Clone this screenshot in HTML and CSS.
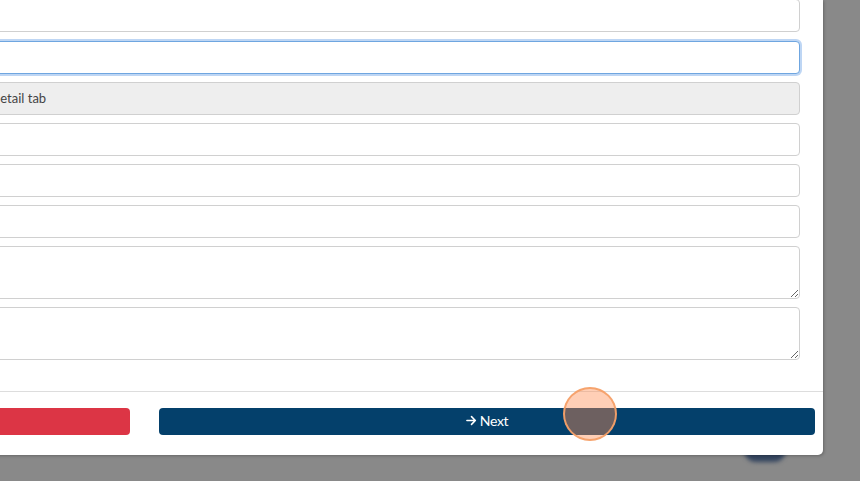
FILE: index.html
```html
<!DOCTYPE html>
<html lang="en">
<head>
<meta charset="utf-8">
<title>Modal form</title>
<link rel="stylesheet" href="styles.css">
</head>
<body>
<div class="page-behind">
  <div class="float-btn"></div>
</div>
<div class="overlay">
  <div class="modal">
    <div class="modal-body">
      <input class="field first" type="text">
      <input class="field focused" type="text">
      <input class="field readonly" type="text" value="detail tab" readonly>
      <input class="field" type="text">
      <input class="field" type="text">
      <input class="field" type="text">
      <textarea class="area"></textarea>
      <textarea class="area"></textarea>
    </div>
    <div class="modal-footer">
      <button class="btn btn-danger" type="button"></button>
      <button class="btn btn-primary" type="button"><svg class="arrow" viewBox="0 0 12 12" width="11" height="11" aria-hidden="true"><path d="M1 6h9.2M6 1.8L10.2 6 6 10.2" fill="none" stroke="#fff" stroke-width="1.7" stroke-linecap="round" stroke-linejoin="round"/></svg><span>Next</span></button>
    </div>
  </div>
</div>
<div class="click-marker"></div>
</body>
</html>
```
FILE: styles.css
```css
* { box-sizing: border-box; }
html, body {
  margin: 0;
  width: 860px;
  height: 481px;
  overflow: hidden;
  background: #898989;
  font-family: Lato, "Open Sans", sans-serif;
}
.page-behind {
  position: absolute;
  inset: 0;
}
.float-btn {
  position: absolute;
  left: 744px;
  top: 438px;
  width: 42px;
  height: 24px;
  border-radius: 12px;
  background: #34455f;
  filter: blur(2px);
}
.overlay {
  position: relative;
  width: 860px;
  height: 481px;
}
.modal {
  width: 867px;
  margin-left: -44px;
  background: #fff;
  border-radius: 0 0 5px 0;
  box-shadow: 1px 1px 3px rgba(0, 0, 0, 0.25);
  display: flex;
  flex-direction: column;
}
.modal-body {
  padding: 0 23px 31px 24px;
  display: flex;
  flex-direction: column;
  gap: 8px;
}
.field, .area {
  display: block;
  width: 100%;
  height: 33px;
  border: 1px solid #d0d0d0;
  border-radius: 4px;
  padding: 0 12px 1px 12px;
  font-family: Lato, "Open Sans", sans-serif;
  font-size: 13px;
  color: #495057;
  background: #fff;
  outline: none;
}
.field.first {
  margin-top: -1px;
  margin-bottom: 1px;
}
.field.focused {
  border-color: #6fa6e0;
  box-shadow: 0 0 0 2px rgba(110, 165, 230, 0.45);
}
.field.readonly {
  background: #eeeeee;
  color: #444;
}
.area {
  height: 53px;
  resize: vertical;
  padding: 6px 12px;
}
.modal-footer {
  border-top: 1px solid #dddddd;
  padding: 16px 8px 20px 8px;
  display: flex;
  gap: 29px;
}
.btn {
  height: 27px;
  border: none;
  border-radius: 4px;
  font-family: Lato, "Open Sans", sans-serif;
  font-size: 14px;
  letter-spacing: -0.3px;
  color: #fff;
  padding: 0 0 2px 0;
  display: flex;
  align-items: center;
  justify-content: center;
  gap: 3px;
}
.arrow {
  display: block;
}
.btn-danger {
  flex: 0 0 166px;
  background: #dc3545;
}
.btn-primary {
  flex: 1;
  background: #04406b;
}
.click-marker {
  position: absolute;
  left: 563px;
  top: 387px;
  width: 54px;
  height: 54px;
  border-radius: 50%;
  background: rgba(255, 140, 80, 0.42);
  border: 2px solid rgba(245, 160, 105, 0.95);
}
```
